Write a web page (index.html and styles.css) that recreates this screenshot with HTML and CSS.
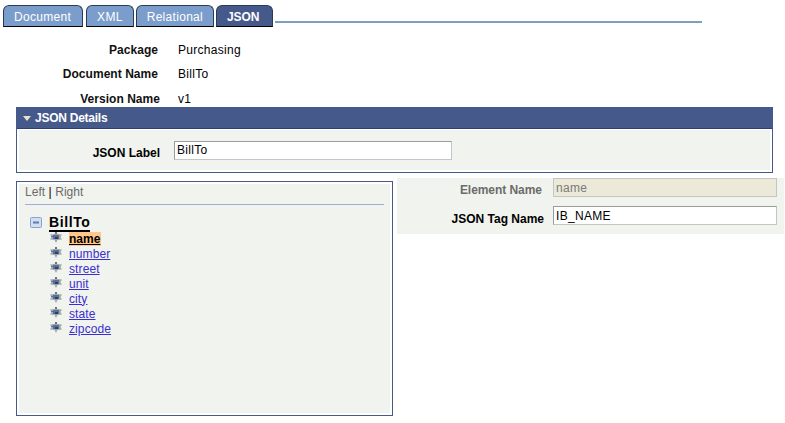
FILE: index.html
```html
<!DOCTYPE html>
<html lang="en">
<head>
<meta charset="utf-8">
<title>JSON</title>
<link rel="stylesheet" href="styles.css">
</head>
<body>
<svg class="defs" width="0" height="0" aria-hidden="true">
  <symbol id="node" viewBox="0 0 12 11">
    <path d="M6 0 L7.5 2 L12 2.5 L10.5 5 L12 7.5 L7.5 8 L6 11 L4.5 8 L0 7.5 L1.5 5 L0 2.5 L4.5 2 Z" fill="#a3a9ab"/>
    <rect x="3" y="3" width="6" height="4" fill="#5d6f8f"/>
    <rect x="1" y="4" width="4" height="1" fill="#4a6fd0"/>
    <rect x="5" y="5" width="3" height="2" fill="#27406f"/>
    <rect x="5" y="0" width="2" height="2" fill="#70777b"/>
  </symbol>
</svg>
<nav class="tabbar">
  <a class="tab">Document</a>
  <a class="tab">XML</a>
  <a class="tab">Relational</a>
  <a class="tab tab-active">JSON</a>
  <span class="tab-line"></span>
</nav>
<section class="summary">
  <div class="sum-row"><span class="sum-label">Package</span><span class="sum-value">Purchasing</span></div>
  <div class="sum-row"><span class="sum-label">Document Name</span><span class="sum-value">BillTo</span></div>
  <div class="sum-row sum-shift"><span class="sum-label">Version Name</span><span class="sum-value">v1</span></div>
</section>
<section class="details">
  <header class="details-head"><span class="tri"></span>JSON Details</header>
  <div class="details-body">
    <label class="details-label">JSON Label</label>
    <input class="field label-field" value="BillTo">
  </div>
</section>
<div class="lower">
  <section class="tree">
    <div class="tree-inner">
      <div class="tree-nav">Left <span class="sep">|</span> Right</div>
      <div class="tree-root">
        <svg class="minus" width="12" height="11" viewBox="0 0 12 11"><rect x="0.5" y="0.5" width="11" height="10" rx="1" fill="#d3deef" stroke="#86a3d2"/><rect x="3" y="4.5" width="6" height="2" fill="#5d7cb5"/></svg>
        <span class="root-name">BillTo</span>
      </div>
      <ul class="nodes">
        <li><svg class="node"><use href="#node"/></svg><a class="cur">name</a></li>
        <li><svg class="node"><use href="#node"/></svg><a>number</a></li>
        <li><svg class="node"><use href="#node"/></svg><a>street</a></li>
        <li><svg class="node"><use href="#node"/></svg><a>unit</a></li>
        <li><svg class="node"><use href="#node"/></svg><a>city</a></li>
        <li><svg class="node"><use href="#node"/></svg><a>state</a></li>
        <li><svg class="node"><use href="#node"/></svg><a>zipcode</a></li>
      </ul>
    </div>
  </section>
  <section class="element">
    <div class="el-row"><label class="el-label el-muted">Element Name</label><input class="field el-field el-disabled" value="name" disabled></div>
    <div class="el-row"><label class="el-label el-tag">JSON Tag Name</label><input class="field el-field" value="IB_NAME"></div>
  </section>
</div>
</body>
</html>
```
FILE: styles.css
```css
html, body { margin: 0; padding: 0; background: #fff; }
body { width: 785px; height: 423px; overflow: hidden; font-family: "Liberation Sans", Arial, sans-serif; font-size: 12px; color: #000; }
.defs { position: absolute; }
.tabbar { display: flex; align-items: flex-end; height: 27px; padding: 5px 0 0 3px; box-sizing: border-box; }
.tab { box-sizing: border-box; height: 22px; padding: 4px 10px 0; margin-right: 2px; background: #7b9dcc; color: #fff; border: 1px solid #2a3b57; border-bottom: 1px solid #000; border-radius: 6px 6px 0 0; line-height: 14px; letter-spacing: 0.3px; }
.tab:first-child { margin-right: 3px; padding-right: 11px; }
.tab-active { background: #46598b; font-weight: 700; padding: 4px 13px 0 10px; letter-spacing: -0.1px; }
.tab-line { width: 427px; height: 2px; margin-bottom: 4px; background: #7d9fbd; }
.summary { padding-top: 11px; }
.sum-row { display: flex; height: 24px; line-height: 24px; }
.sum-row:nth-child(2) { height: 25px; line-height: 25px; }
.sum-label { width: 158px; text-align: right; font-weight: 700; color: #111; letter-spacing: 0.04px; }
.sum-shift .sum-label { width: 160px; }
.sum-shift .sum-value { margin-left: 18px; }
.sum-value { margin-left: 20px; letter-spacing: 0.3px; }
.details { box-sizing: border-box; width: 757px; height: 66px; margin: -4px 0 0 16px; border: 1px solid #46598b; background: #fff; }
.details-head { height: 21px; padding-top: 1px; background: #46598b; border-bottom: 1px solid #2b3f77; color: #fff; font-weight: 700; line-height: 19px; display: flex; align-items: center; box-sizing: border-box; letter-spacing: -0.25px; }
.tri { width: 0; height: 0; margin: 0 4px 0 6px; border-left: 4px solid transparent; border-right: 4px solid transparent; border-top: 5px solid #e9e4c8; }
.details-body { display: flex; align-items: center; height: 40px; margin: 1px 2px 0; background: #f1f3ee; }
.details-label { width: 141px; text-align: right; font-weight: 700; padding-top: 5px; }
.field { box-sizing: border-box; height: 19px; padding: 0 2px; border: 1px solid #c4c6c2; border-top-color: #9c9c9c; border-left-color: #9c9c9c; font: 12px "Liberation Sans", Arial, sans-serif; letter-spacing: 0.3px; color: #000; background: #fff; outline: none; border-radius: 0; }
.label-field { width: 278px; margin-left: 14px; }
.lower { display: flex; align-items: flex-start; margin-top: 8px; padding-left: 16px; }
.tree { box-sizing: border-box; width: 377px; height: 235px; border: 1px solid #46598b; padding: 2px; background: #fff; }
.tree-inner { height: 100%; background: #f1f3ee; padding: 0 6px; box-sizing: border-box; }
.tree-nav { height: 21px; padding-top: 1px; box-sizing: border-box; line-height: 15px; color: #6b6b6b; border-bottom: 1px solid #9fb0d6; letter-spacing: 0.05px; }
.sep { color: #000; }
.tree-root { display: flex; align-items: center; height: 20px; margin-top: 8px; padding-left: 5px; }
.minus { margin-right: 7px; margin-top: -2px; }
.root-name { font-size: 14px; font-weight: 700; line-height: 16px; border-bottom: 2px solid #000; color: #000; letter-spacing: 0.6px; }
.nodes { list-style: none; margin: -2px 0 0; padding: 0 0 0 25px; }
.nodes li { display: flex; align-items: center; height: 15px; }
.node { width: 12px; height: 11px; margin-right: 7px; margin-top: -2px; }
.nodes a { color: #3a2fd0; text-decoration: underline; line-height: 14px; letter-spacing: 0.1px; }
.nodes a.cur { color: #000; font-weight: 700; background: #ffc78a; padding: 0 1px 0 0; letter-spacing: 0; }
.element { box-sizing: border-box; width: 387px; height: 56px; margin: -3px 0 0 4px; background: #f1f3ee; }
.el-row { display: flex; align-items: flex-start; height: 28px; }
.el-label { width: 147px; text-align: right; font-weight: 700; line-height: 24px; }
.el-muted { color: #6b6b6b; width: 145px; margin-right: 2px; letter-spacing: -0.05px; }
.el-tag { line-height: 26px; }
.el-field { width: 224px; margin-left: 9px; }
.el-disabled { background: #ece9d8; color: #7a7a7a; border-color: #c4c6c2; }
```
